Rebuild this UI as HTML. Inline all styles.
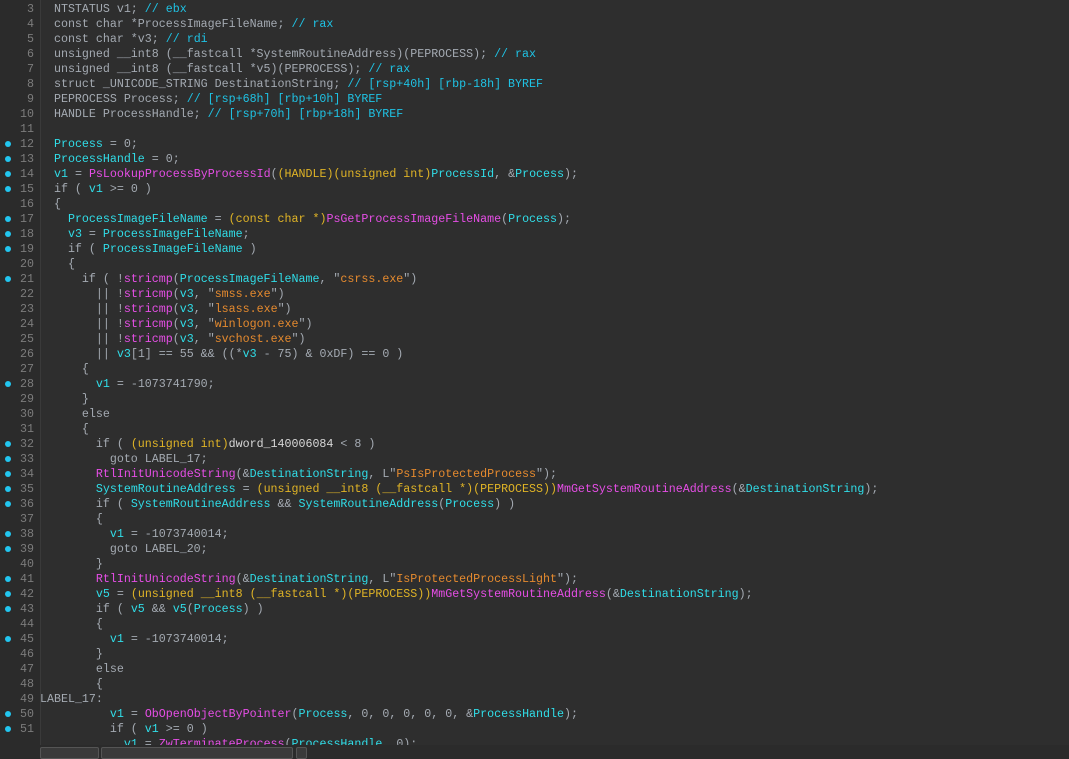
<!DOCTYPE html>
<html><head><meta charset="utf-8"><style>
html,body{margin:0;padding:0;background:#2b2b2b;width:1069px;height:755px;overflow:hidden}
#code{position:absolute;left:40px;top:0;width:1029px;height:755px;background:#2e2e2e;border-left:1px solid #3a3a3a}
pre{margin:0;font-family:"Liberation Mono","DejaVu Sans Mono",monospace;font-size:11.65px;line-height:15px;color:#a4aab2}
#nums{position:absolute;left:0;top:2px;width:34px;text-align:right;color:#7c7c7c}
#txt{position:absolute;left:40px;top:2px}
.d{position:absolute;left:5px;width:6px;height:6px;border-radius:50%;background:#22c6f0}
.v{color:#30dde8}.f{color:#e64ee6}.t{color:#e0b426}.s{color:#e58a2e}.c{color:#1fc2e4}.w{color:#d8d8d8}
#strip{position:absolute;left:40px;top:745px;width:1029px;height:10px;background:#2b2b2b}
.bar{position:absolute;top:747px;height:10px;background:#3a3a3a;border:1px solid #555;border-radius:2px}
</style></head><body>
<div id="code"></div>
<pre id="nums">3
4
5
6
7
8
9
10
11
12
13
14
15
16
17
18
19
20
21
22
23
24
25
26
27
28
29
30
31
32
33
34
35
36
37
38
39
40
41
42
43
44
45
46
47
48
49
50
51</pre>
<div class="d" style="top:141px"></div><div class="d" style="top:156px"></div><div class="d" style="top:171px"></div><div class="d" style="top:186px"></div>
<div class="d" style="top:216px"></div><div class="d" style="top:231px"></div><div class="d" style="top:246px"></div><div class="d" style="top:276px"></div>
<div class="d" style="top:381px"></div><div class="d" style="top:441px"></div><div class="d" style="top:456px"></div><div class="d" style="top:471px"></div>
<div class="d" style="top:486px"></div><div class="d" style="top:501px"></div><div class="d" style="top:531px"></div><div class="d" style="top:546px"></div>
<div class="d" style="top:576px"></div><div class="d" style="top:591px"></div><div class="d" style="top:606px"></div><div class="d" style="top:636px"></div>
<div class="d" style="top:711px"></div><div class="d" style="top:726px"></div>
<pre id="txt">  NTSTATUS v1; <span class="c">// ebx</span>
  const char *ProcessImageFileName; <span class="c">// rax</span>
  const char *v3; <span class="c">// rdi</span>
  unsigned __int8 (__fastcall *SystemRoutineAddress)(PEPROCESS); <span class="c">// rax</span>
  unsigned __int8 (__fastcall *v5)(PEPROCESS); <span class="c">// rax</span>
  struct _UNICODE_STRING DestinationString; <span class="c">// [rsp+40h] [rbp-18h] BYREF</span>
  PEPROCESS Process; <span class="c">// [rsp+68h] [rbp+10h] BYREF</span>
  HANDLE ProcessHandle; <span class="c">// [rsp+70h] [rbp+18h] BYREF</span>

  <span class="v">Process</span> = 0;
  <span class="v">ProcessHandle</span> = 0;
  <span class="v">v1</span> = <span class="f">PsLookupProcessByProcessId</span>(<span class="t">(HANDLE)(unsigned int)</span><span class="v">ProcessId</span>, &amp;<span class="v">Process</span>);
  if ( <span class="v">v1</span> &gt;= 0 )
  {
    <span class="v">ProcessImageFileName</span> = <span class="t">(const char *)</span><span class="f">PsGetProcessImageFileName</span>(<span class="v">Process</span>);
    <span class="v">v3</span> = <span class="v">ProcessImageFileName</span>;
    if ( <span class="v">ProcessImageFileName</span> )
    {
      if ( !<span class="f">stricmp</span>(<span class="v">ProcessImageFileName</span>, "<span class="s">csrss.exe</span>")
        || !<span class="f">stricmp</span>(<span class="v">v3</span>, "<span class="s">smss.exe</span>")
        || !<span class="f">stricmp</span>(<span class="v">v3</span>, "<span class="s">lsass.exe</span>")
        || !<span class="f">stricmp</span>(<span class="v">v3</span>, "<span class="s">winlogon.exe</span>")
        || !<span class="f">stricmp</span>(<span class="v">v3</span>, "<span class="s">svchost.exe</span>")
        || <span class="v">v3</span>[1] == 55 &amp;&amp; ((*<span class="v">v3</span> - 75) &amp; 0xDF) == 0 )
      {
        <span class="v">v1</span> = -1073741790;
      }
      else
      {
        if ( <span class="t">(unsigned int)</span><span class="w">dword_140006084</span> &lt; 8 )
          goto LABEL_17;
        <span class="f">RtlInitUnicodeString</span>(&amp;<span class="v">DestinationString</span>, L"<span class="s">PsIsProtectedProcess</span>");
        <span class="v">SystemRoutineAddress</span> = <span class="t">(unsigned __int8 (__fastcall *)(PEPROCESS))</span><span class="f">MmGetSystemRoutineAddress</span>(&amp;<span class="v">DestinationString</span>);
        if ( <span class="v">SystemRoutineAddress</span> &amp;&amp; <span class="v">SystemRoutineAddress</span>(<span class="v">Process</span>) )
        {
          <span class="v">v1</span> = -1073740014;
          goto LABEL_20;
        }
        <span class="f">RtlInitUnicodeString</span>(&amp;<span class="v">DestinationString</span>, L"<span class="s">IsProtectedProcessLight</span>");
        <span class="v">v5</span> = <span class="t">(unsigned __int8 (__fastcall *)(PEPROCESS))</span><span class="f">MmGetSystemRoutineAddress</span>(&amp;<span class="v">DestinationString</span>);
        if ( <span class="v">v5</span> &amp;&amp; <span class="v">v5</span>(<span class="v">Process</span>) )
        {
          <span class="v">v1</span> = -1073740014;
        }
        else
        {
LABEL_17:
          <span class="v">v1</span> = <span class="f">ObOpenObjectByPointer</span>(<span class="v">Process</span>, 0, 0, 0, 0, 0, &amp;<span class="v">ProcessHandle</span>);
          if ( <span class="v">v1</span> &gt;= 0 )
            <span class="v">v1</span> = <span class="f">ZwTerminateProcess</span>(<span class="v">ProcessHandle</span>, 0);</pre>
<div id="strip"></div>
<div class="bar" style="left:40px;width:57px"></div>
<div class="bar" style="left:101px;width:190px"></div>
<div class="bar" style="left:296px;width:9px"></div>
</body></html>
